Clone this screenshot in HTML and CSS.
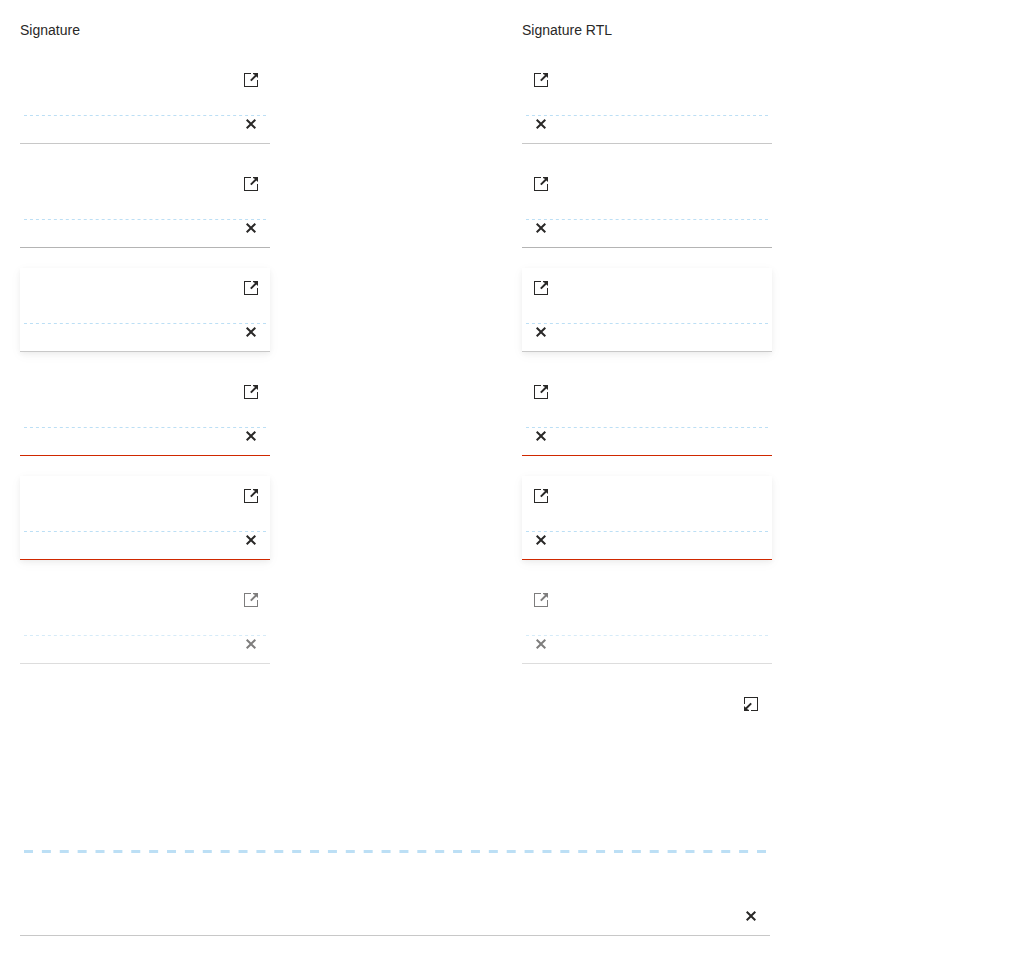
FILE: index.html
```
<!DOCTYPE html>
<html lang="en">
<head>
<meta charset="utf-8">
<title>Signature</title>
<link rel="stylesheet" href="styles.css">
</head>
<body>
<svg class="defs" aria-hidden="true">
  <symbol id="open" viewBox="0 0 14 14">
    <path d="M7 0H0V14H14V7H13V13H1V1H7Z"/>
    <path d="M9 0H14V5L12.4 3.4L7.5 8.3L6.1 6.9L11 2L9 1Z"/>
  </symbol>
  <symbol id="clear" viewBox="0 0 10 10">
    <path d="M1.4 0L5 3.6L8.6 0L10 1.4L6.4 5L10 8.6L8.6 10L5 6.4L1.4 10L0 8.6L3.6 5L0 1.4Z"/>
  </symbol>
</svg>
<main class="grid" id="grid">
  <span class="title">Signature</span>
  <span class="title">Signature RTL</span>
</main>
<script src="script.js"></script>
</body>
</html>
```
FILE: styles.css
```
body {
  margin: 0;
  background: #fff;
  color: #292827;
  font: 14px/20px "Liberation Sans", Arial, sans-serif;
}
.defs { display: none; }
.grid {
  display: grid;
  grid-template-columns: repeat(2, minmax(0, 1fr));
  gap: 20px;
  padding: 20px;
}
.signature {
  box-sizing: border-box;
  width: 250px;
  height: 84px;
  border-bottom: 1px solid #c8c8c8;
  display: flex;
  flex-direction: column;
  justify-content: space-between;
  align-items: flex-end;
  padding: 4px;
  position: relative;
  background: #fff;
}
.hover { border-bottom-color: #b4b4b4; }
.focus {
  box-shadow: 0 2px 5px rgba(0, 0, 0, .05), 0 3px 12px rgba(0, 0, 0, .04);
}
.invalid { border-bottom-color: #d02800; }
.disabled { opacity: .6; }
.maximized {
  width: 750px;
  height: 252px;
}
.action {
  width: 30px;
  height: 31px;
  display: flex;
  align-items: center;
  justify-content: center;
}
.clear { height: 30px; }
.icon {
  display: block;
  width: 14px;
  height: 14px;
  fill: #292827;
}
.clear .icon {
  width: 10px;
  height: 10px;
}
.maximized .open .icon { transform: rotate(180deg); }
.line {
  position: absolute;
  left: 4px;
  top: 55px;
  width: 242px;
  height: 1px;
  stroke: #bcdff5;
  stroke-width: 1px;
  stroke-dasharray: 3 2.975;
}
.maximized .line {
  top: 166px;
  width: 742px;
  height: 3px;
  stroke-width: 3px;
  stroke-dasharray: 9 8.878;
}
```
FILE: script.js
```
const grid = document.getElementById('grid');
const states = ['', 'hover', 'focus', 'invalid', 'invalid focus', 'disabled'];

function addSignature(state, dir) {
  const large = state === 'maximized';
  const y = large ? 1.5 : 0.5;
  const item = document.createElement('div');
  item.className = 'signature ' + state;
  item.dir = dir;
  item.innerHTML = `
    <span class="action open"><svg class="icon"><use href="#open"/></svg></span>
    <svg class="line"><line x1="0" y1="${y}" x2="${large ? 742 : 242}" y2="${y}"/></svg>
    <span class="action clear"><svg class="icon"><use href="#clear"/></svg></span>`;
  grid.append(item);
}

states.forEach(state => {
  addSignature(state, 'ltr');
  addSignature(state, 'rtl');
});
addSignature('maximized', 'ltr');
```
